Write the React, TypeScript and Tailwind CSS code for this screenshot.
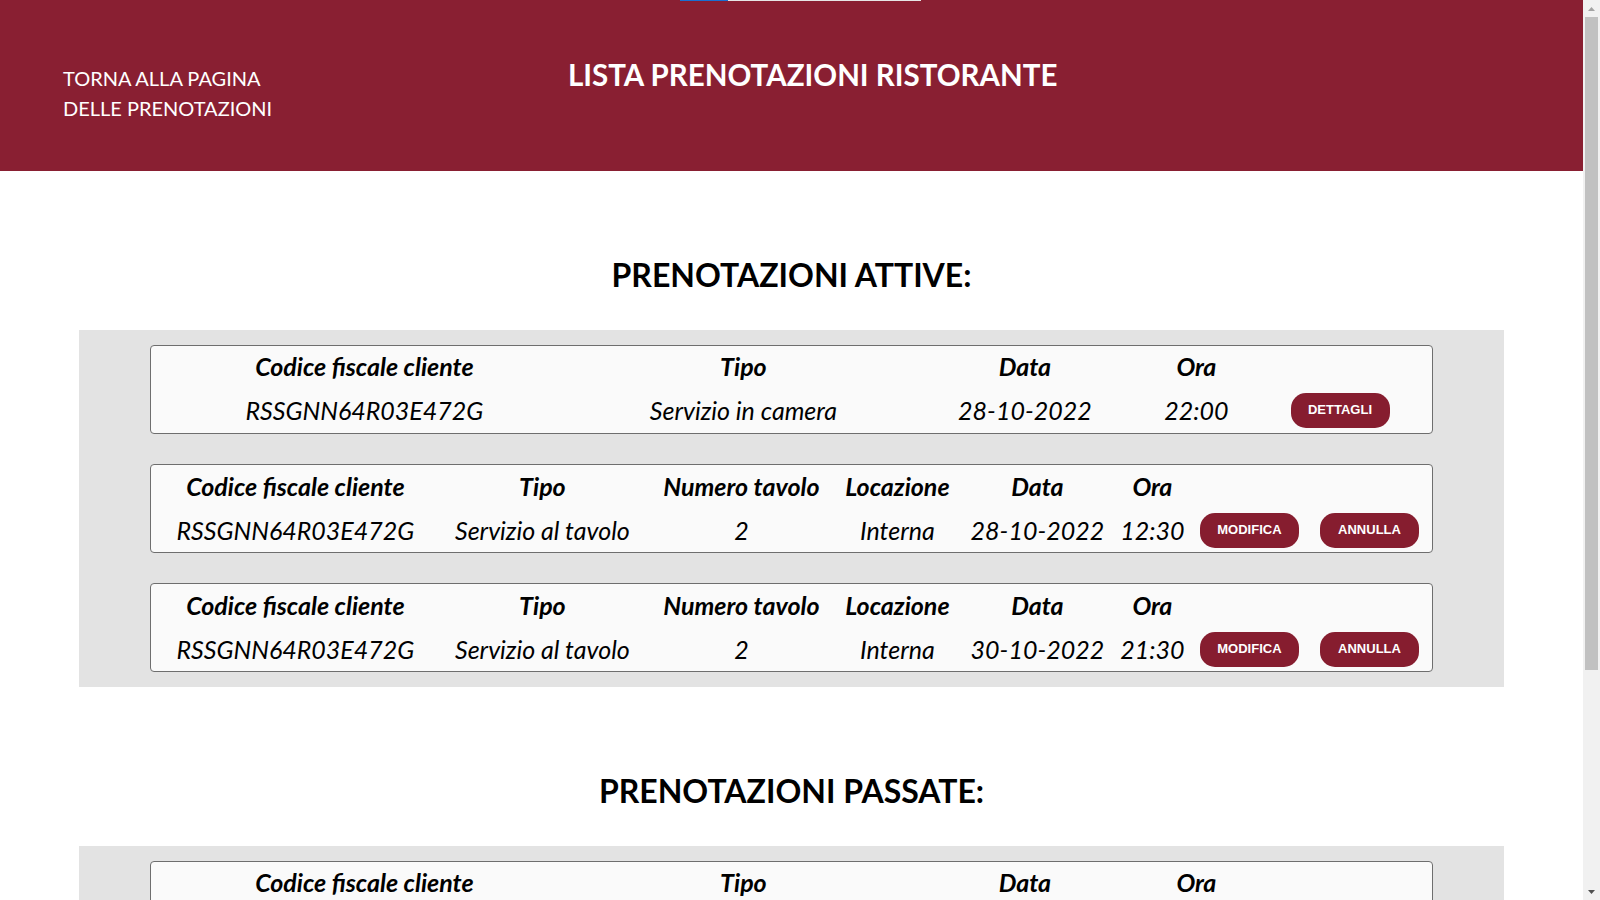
import React from "react";

const HEAD = "text-center font-bold italic text-[25px] leading-[30px] text-black whitespace-nowrap";
const VAL = "text-center italic text-[25px] leading-[30px] text-black whitespace-nowrap";

function Btn({ label }: { label: string }) {
  return (
    <button className="w-[99px] h-[35px] rounded-[15px] bg-[#861d2f] text-white text-[13px] font-bold [font-family:'Liberation_Sans',Arial,sans-serif] tracking-normal">
      {label}
    </button>
  );
}

type Simple = { cf: string; tipo: string; data: string; ora: string };
type Table = Simple & { tavolo: string; loc: string };

function SimpleCard({ r }: { r: Simple }) {
  const cols = "grid grid-cols-[426px_332px_231px_112px_1fr]";
  return (
    <div className="w-[90%] mx-auto bg-[#fafafa] border border-[#6e6e6e] rounded-[4px] pt-[5px] pb-[5px] flex flex-col gap-[11px]">
      <div className={cols + " h-[30px]"}>
        <div className={HEAD}>Codice fiscale cliente</div>
        <div className={HEAD}>Tipo</div>
        <div className={HEAD}>Data</div>
        <div className={HEAD}>Ora</div>
        <div />
      </div>
      <div className={cols + " h-[36px] items-center"}>
        <div className={VAL}>{r.cf}</div>
        <div className={VAL}>{r.tipo}</div>
        <div className={VAL}>{r.data}</div>
        <div className={VAL}>{r.ora}</div>
        <div className="flex justify-center pr-[4px]">
          <Btn label="DETTAGLI" />
        </div>
      </div>
    </div>
  );
}

function TableCard({ r }: { r: Table }) {
  const cols = "grid grid-cols-[288px_206px_192px_120px_160px_70px_124px_1fr]";
  return (
    <div className="w-[90%] mx-auto bg-[#fafafa] border border-[#6e6e6e] rounded-[4px] pt-[6px] pb-[4px] flex flex-col gap-[11px]">
      <div className={cols + " h-[30px]"}>
        <div className={HEAD}>Codice fiscale cliente</div>
        <div className={HEAD}>Tipo</div>
        <div className={HEAD}>Numero tavolo</div>
        <div className={HEAD}>Locazione</div>
        <div className={HEAD}>Data</div>
        <div className={HEAD}>Ora</div>
        <div />
        <div />
      </div>
      <div className={cols + " h-[36px] items-center"}>
        <div className={VAL}>{r.cf}</div>
        <div className={VAL}>{r.tipo}</div>
        <div className={VAL}>{r.tavolo}</div>
        <div className={VAL}>{r.loc}</div>
        <div className={VAL}>{r.data}</div>
        <div className={VAL}>{r.ora}</div>
        <div className="flex justify-center">
          <Btn label="MODIFICA" />
        </div>
        <div className="flex justify-center pr-[4px]">
          <Btn label="ANNULLA" />
        </div>
      </div>
    </div>
  );
}

function Section({ title, children }: { title: string; children: React.ReactNode }) {
  return (
    <section className="pt-[84px] flex flex-col">
      <h2 className="text-center font-bold text-[32px] leading-[40px] text-black">{title}</h2>
      <div className="mt-[35px] w-[90%] mx-auto bg-[#e3e3e3] py-[15px] flex flex-col gap-[30px]">
        {children}
      </div>
    </section>
  );
}

export default function App() {
  const cf = "RSSGNN64R03E472G";
  return (
    <div className="h-screen w-full flex overflow-hidden bg-white [font-family:Lato,'Noto_Sans',sans-serif]">
      <div className="flex-1 min-w-0 h-full overflow-hidden">
        <header className="h-[171px] bg-[#891f32] flex flex-col">
          <div className="h-[1px] flex pl-[680px]">
            <div className="w-[48px] bg-[#1a6fd1]" />
            <div className="w-[193px] bg-[#e6e6e6]" />
          </div>
          <div className="flex items-start pt-[54px]">
            <a className="ml-[63px] mt-[8px] text-white text-[20px] leading-[30px] w-[240px]">
              TORNA ALLA PAGINA
              <br />
              DELLE PRENOTAZIONI
            </a>
            <h1 className="ml-[265px] text-white font-bold text-[29.5px] leading-[40px] whitespace-nowrap">
              LISTA PRENOTAZIONI RISTORANTE
            </h1>
          </div>
        </header>

        <Section title="PRENOTAZIONI ATTIVE:">
          <SimpleCard r={{ cf, tipo: "Servizio in camera", data: "28-10-2022", ora: "22:00" }} />
          <TableCard r={{ cf, tipo: "Servizio al tavolo", tavolo: "2", loc: "Interna", data: "28-10-2022", ora: "12:30" }} />
          <TableCard r={{ cf, tipo: "Servizio al tavolo", tavolo: "2", loc: "Interna", data: "30-10-2022", ora: "21:30" }} />
        </Section>

        <Section title="PRENOTAZIONI PASSATE:">
          <SimpleCard r={{ cf, tipo: "Servizio in camera", data: "20-10-2022", ora: "20:00" }} />
        </Section>
      </div>

      <div className="w-[17px] h-full bg-[#f1f1f1] flex flex-col items-center">
        <div className="h-[17px] w-full flex items-center justify-center">
          <svg width="7" height="4" viewBox="0 0 7 4"><path d="M0 4 L3.5 0 L7 4 Z" fill="#a3a3a3" /></svg>
        </div>
        <div className="w-[13px] h-[653px] bg-[#c1c1c1]" />
        <div className="flex-1" />
        <div className="h-[17px] w-full flex items-center justify-center">
          <svg width="7" height="4" viewBox="0 0 7 4"><path d="M0 0 L7 0 L3.5 4 Z" fill="#505050" /></svg>
        </div>
      </div>
    </div>
  );
}
